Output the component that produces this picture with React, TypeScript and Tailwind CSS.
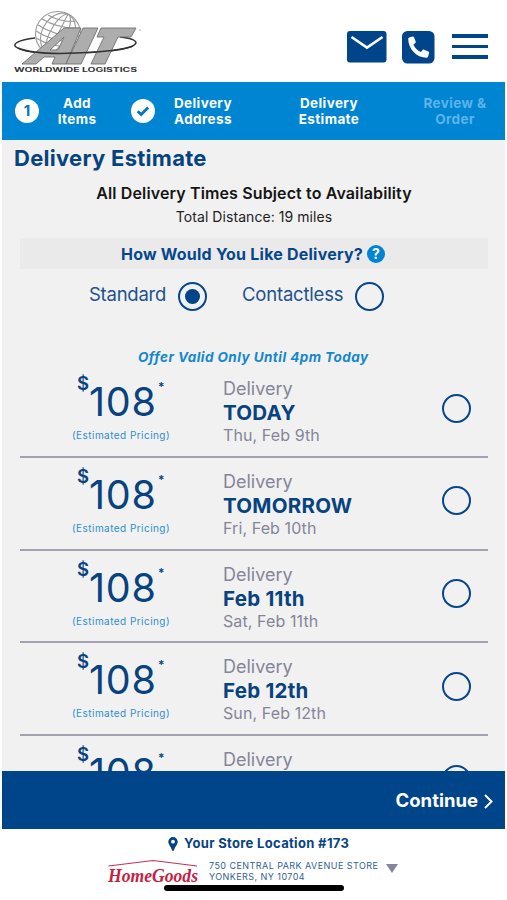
import React from "react";

const options = [
  { title: "TODAY", date: "Thu, Feb 9th" },
  { title: "TOMORROW", date: "Fri, Feb 10th" },
  { title: "Feb 11th", date: "Sat, Feb 11th" },
  { title: "Feb 12th", date: "Sun, Feb 12th" },
  { title: "Feb 13th", date: "Mon, Feb 13th" },
];

function AitLogo() {
  return (
    <svg width="140" height="70" viewBox="6 6 140 70" className="block" aria-label="AIT Worldwide Logistics">
      <g fill="none" stroke="#9a9a9a" strokeWidth="1.1">
        <circle cx="58" cy="34" r="22.5" fill="#fff" />
        <ellipse cx="58" cy="34" rx="16" ry="22" transform="rotate(28 58 34)" />
        <ellipse cx="58" cy="34" rx="8" ry="22" transform="rotate(28 58 34)" />
        <path d="M68 14 48 54M48 15q14 8 28 6M42 19q17 10 37 9M38 25q18 12 42 11M36 31q18 12 43 11M36 38q16 10 38 9" />
      </g>
      <path d="M35 38C18 40 12 44 16 47 24 53 52 54 77 53 108 52 134 49 136 43 136 40 129 38 120 37" fill="none" stroke="#333" strokeWidth="1.5" />
      <g fill="#adadad" stroke="#707070" strokeWidth=".9" fillRule="evenodd">
        <path d="M22 64 64 28H81L66 64H52L55 57H44L36 64ZM50 50H58L64 37Z" />
        <path d="M66 64 83 28H98L81 64Z" />
        <path d="M97 37 101 28H136L131 37H118L105 64H91L104 37Z" />
      </g>
      <path d="M18 48C32 54 55 54 77 53 103 52 125 49 133 46" fill="none" stroke="#333" strokeWidth="1.5" />
      <text x="14" y="71.8" textLength="123" lengthAdjust="spacingAndGlyphs" fontFamily="Inter, sans-serif" fontWeight="700" fontSize="5.5" fill="#333">WORLDWIDE LOGISTICS</text>
      <circle cx="140" cy="30" r=".7" fill="#999" />
    </svg>
  );
}

function Radio({ checked = false }: { checked?: boolean }) {
  return (
    <span className="flex size-[29px] shrink-0 items-center justify-center rounded-full border-2 border-[#07468a]">
      {checked && <span className="size-[15px] rounded-full bg-[#004489]" />}
    </span>
  );
}

function Header() {
  return (
    <header className="flex h-[82px] shrink-0 bg-white pl-[4px] pt-[6px]">
      <AitLogo />
      <div className="ml-[201px] mt-[25px] flex items-start">
        <svg width="40" height="32" viewBox="0 0 40 32">
          <rect width="39.5" height="31.5" rx="3" fill="#004489" />
          <path d="M4.5 6 20 16.5 35.5 6" fill="none" stroke="#fff" strokeWidth="2.7" />
        </svg>
        <svg width="33" height="33" viewBox="0 0 33 33" className="ml-[15px]">
          <rect width="32.5" height="32.5" rx="5.5" fill="#004489" />
          <path d="M7.2 6.4 10.6 5.5C11.3 5.3 11.8 5.7 12 6.3L13.7 10.6C13.9 11.2 13.8 11.7 13.3 12.1L11.4 13.8C12.8 17 15.5 19.7 18.8 21L20.6 19.1C21 18.6 21.6 18.5 22.1 18.7L26.3 20.5C27 20.8 27.3 21.3 27.1 22L26 25.7C25.8 26.4 25.3 26.8 24.6 26.8 14.5 26.8 6.2 18 6.2 7.8 6.2 7.1 6.6 6.6 7.2 6.4Z" fill="#fff" />
        </svg>
        <div className="ml-[17px] mt-[3px] flex w-[36px] flex-col gap-[7px]">
          <span className="h-[3.5px] bg-[#004489]" />
          <span className="h-[3.5px] bg-[#004489]" />
          <span className="h-[3.5px] bg-[#004489]" />
        </div>
      </div>
    </header>
  );
}

function Steps() {
  const label = "w-[80px] text-center text-[13.5px] font-bold leading-[16.5px] tracking-[0.4px]";
  return (
    <nav className="flex h-[58px] shrink-0 items-center bg-[#0085d2] pl-[13px] text-white">
      <span className="flex size-[24px] items-center justify-center rounded-full bg-white text-[15px] font-bold text-[#0078bd]">1</span>
      <div className={label + " -ml-[2px] mr-[14px]"}>Add<br />Items</div>
      <svg width="24" height="24" viewBox="0 0 24 24">
        <circle cx="12" cy="12" r="12" fill="#fff" />
        <path d="m6.7 12.2 3.500 3.400 7-7" fill="none" stroke="#0078bd" strokeWidth="2.8" />
      </svg>
      <div className={label + " ml-[8px]"}>Delivery<br />Address</div>
      <div className={label + " ml-[46px]"}>Delivery<br />Estimate</div>
      <div className={label + " ml-[46px] text-[#5db4ec]"}>Review &amp;<br />Order</div>
    </nav>
  );
}

function OptionRow({ title, date }: { title: string; date: string }) {
  return (
    <div className="flex h-[92.8px] shrink-0 border-b-2 border-[#a1a1b0]">
      <div className="ml-[52px] w-[100px]">
        <div className="flex h-[60px] pl-[5px] text-[#07437f]">
          <span className="mt-[6px] w-[12px] text-[18.5px] font-semibold leading-[24px]">$</span>
          <span className="mt-[16px] w-[69px] whitespace-nowrap text-[39.5px] leading-[42px] tracking-[0.8px]">108</span>
          <span className="mt-[12px] text-[12px] font-semibold leading-[20px]">*</span>
        </div>
        <div className="mt-[4px] whitespace-nowrap text-[10px] leading-[12px] tracking-[0.45px] text-[#2f8dce]">(Estimated Pricing)</div>
      </div>
      <div className="ml-[51px] w-[219px] whitespace-nowrap">
        <div className="mt-[12px] text-[18px] leading-[24px] text-[#85859a]">Delivery</div>
        <div className="text-[20.5px] font-bold leading-[24px] tracking-[0.25px] text-[#07437f]">{title}</div>
        <div className="text-[16px] leading-[21px] tracking-[0.1px] text-[#85859a]">{date}</div>
      </div>
      <div className="mt-[28.5px]"><Radio /></div>
    </div>
  );
}

function Footer() {
  return (
    <footer className="flex h-[71px] shrink-0 flex-col bg-white text-[#07437f]">
      <div className="flex h-[29px] items-center pl-[166px]">
        <svg width="10" height="14" viewBox="0 0 10 14">
          <path fillRule="evenodd" d="M5 0a4.7 4.7 0 0 0-4.7 4.7C.3 7.6 3 9.4 4 13.3c.2.8 1.8.8 2 0C7 9.4 9.7 7.6 9.7 4.7A4.7 4.7 0 0 0 5 0Zm0 2.8a1.9 1.9 0 1 1 0 3.8 1.9 1.9 0 0 1 0-3.8Z" fill="#07437f" />
        </svg>
        <span className="ml-[6px] whitespace-nowrap text-[13px] font-bold tracking-[0.33px]">Your Store Location #173</span>
      </div>
      <div className="flex pl-[105px]">
        <svg width="94" height="28" viewBox="0 0 94 28">
          <path d="m1.5 8L46 2.500l44 5.500" fill="none" stroke="#c92e52" strokeWidth="1.2" />
          <text x="1" y="24" textLength="90" lengthAdjust="spacingAndGlyphs" fontFamily="Liberation Serif, serif" fontStyle="italic" fontWeight="700" fontSize="18" fill="#c61f45">HomeGoods</text>
        </svg>
        <div className="ml-[8px] mt-[2px] whitespace-nowrap text-[9px] leading-[11px] tracking-[0.44px] text-[#315f95]">750 CENTRAL PARK AVENUE STORE<br />YONKERS, NY 10704</div>
        <svg width="12" height="9" viewBox="0 0 12 9" className="ml-[8px] mt-[6px]"><path d="M0 0H12L6 9Z" fill="#85859a" /></svg>
      </div>
      <div className="-mt-[1.5px] ml-[162px] h-[6px] w-[180px] shrink-0 rounded-full bg-black" />
    </footer>
  );
}

export default function App() {
  return (
    <div className="h-[900px] w-[507px] overflow-hidden bg-white px-[2px] font-['Inter',sans-serif]">
      <div className="flex h-full w-[503px] flex-col">
        <Header />
        <Steps />
        <main className="flex h-[631px] shrink-0 flex-col overflow-hidden bg-[#f1f1f1] pl-[18px] pr-[17px]">
          <h1 className="-ml-[6px] mt-[3px] whitespace-nowrap text-[22px] font-bold leading-[30px] tracking-[0.27px] text-[#07437f]">Delivery Estimate</h1>
          <p className="mt-[8px] text-center text-[16px] font-semibold leading-[24px] tracking-[0.13px] text-[#151515]">All Delivery Times Subject to Availability</p>
          <p className="mt-[2px] text-center text-[14px] leading-[20px] tracking-[0.06px] text-[#222]">Total Distance: 19 miles</p>
          <div className="mt-[11px] flex h-[31px] shrink-0 items-center bg-[#eaeaea] pl-[101px]">
            <span className="whitespace-nowrap text-[16px] font-bold tracking-[0.22px] text-[#07468a]">How Would You Like Delivery?</span>
            <span className="ml-[4px] flex size-[18px] items-center justify-center rounded-full bg-[#0085d2] text-[14px] font-bold text-white">?</span>
          </div>
          <div className="mt-[13px] flex h-[29px] shrink-0 pl-[69px] text-[18.5px] leading-[25px] text-[#21528d]">
            <span className="w-[89px] whitespace-nowrap tracking-[-0.25px]">Standard</span>
            <span><Radio checked /></span>
            <span className="ml-[35px] w-[113px] whitespace-nowrap tracking-[-0.2px]">Contactless</span>
            <span><Radio /></span>
          </div>
          <p className="mt-[36px] h-[18px] shrink-0 whitespace-nowrap pl-[118px] text-[13.5px] font-bold italic leading-[20px] tracking-[0.45px] text-[#1587cc]">Offer Valid Only Until 4pm Today</p>
          {options.map((o) => <OptionRow key={o.title} {...o} />)}
        </main>
        <div className="flex h-[58px] shrink-0 items-center justify-end bg-[#004489] pr-[12px] text-white">
          <span className="text-[18.5px] font-bold leading-[24px]">Continue</span>
          <svg width="9" height="15" viewBox="0 0 9 15" className="ml-[6px] mt-[2px]"><path d="m1 1 6.5 6.5L1 14" fill="none" stroke="#fff" strokeWidth="2" /></svg>
        </div>
        <Footer />
      </div>
    </div>
  );
}
